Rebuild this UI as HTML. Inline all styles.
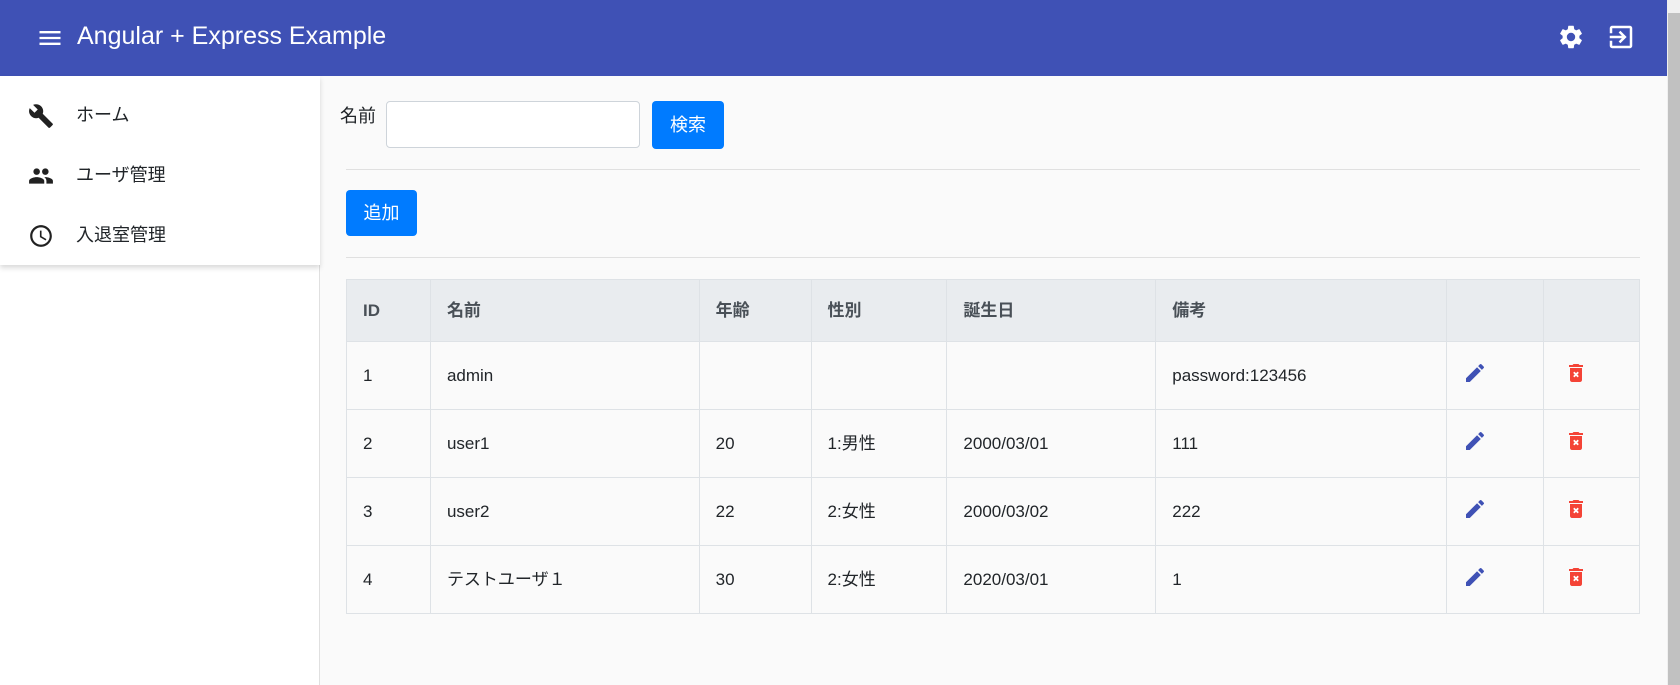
<!DOCTYPE html>
<html><head><meta charset="utf-8"><style>
*{box-sizing:border-box;margin:0;padding:0}
body{width:1680px;height:685px;overflow:hidden;background:#fafafa;font-family:"Liberation Sans","Noto Sans CJK JP",sans-serif;color:#212529;position:relative;line-height:1.2}
.tb{position:absolute;left:0;top:0;width:1667px;height:76px;background:#3f51b5;color:#fff}
.tb .t{position:absolute;left:77px;top:21px;font-size:25px;line-height:30px}
.sb{position:absolute;left:0;top:76px;width:320px;height:609px;background:#fff;border-right:1px solid #e0e0e0}
.menu{position:absolute;left:0;top:76px;width:320px;height:189px;background:#fff;box-shadow:0 3px 5px rgba(0,0,0,.15)}
.mi{position:absolute;left:0;height:60px;width:320px;font-size:18px}
.mi svg{position:absolute;left:28px;top:18px}
.mi span{position:absolute;left:76px;top:18px;line-height:24px}
.scroll{position:absolute;left:1667px;top:0;width:13px;height:685px;background:#f0f0f0}
.scroll div{position:absolute;left:1px;top:13px;width:12px;height:672px;background:#c1c1c1}
.lbl{position:absolute;left:340px;top:104px;font-size:18px;line-height:24px}
.inp{position:absolute;left:386px;top:101px;width:254px;height:47px;border:1px solid #ced4da;border-radius:4px;background:#fff}
.btn{position:absolute;background:#007bff;color:#fff;border-radius:4px;font-size:18px;text-align:center}
.hr{position:absolute;left:346px;width:1294px;height:1px;background:#e0e0e0}
table{position:absolute;left:346px;top:279px;width:1294px;border-collapse:collapse;font-size:17px}
td,th{border:1px solid #dee2e6;padding:0 16px;text-align:left;vertical-align:middle;line-height:22px}
th{background:#e9ecef;color:#495057;height:62px;font-weight:bold}
td{height:68px}
</style></head><body>
<div class="tb">
<svg style="position:absolute;left:36px;top:24px" width="28" height="28" viewBox="0 0 24 24"><path fill="#fff" d="M3 18h18v-2H3v2zm0-5h18v-2H3v2zm0-7v2h18V6H3z"/></svg>
<div class="t">Angular + Express Example</div>
<svg style="position:absolute;left:1557px;top:23px" width="28" height="28" viewBox="0 0 24 24"><path fill="#fff" d="M19.14 12.94c.04-.3.06-.61.06-.94 0-.32-.02-.64-.07-.94l2.030-1.58a.49.49 0 0 0 .12-.61l-1.92-3.32a.49.49 0 0 0-.59-.22l-2.39.96c-.5-.38-1.03-.7-1.62-.94l-.36-2.54a.48.48 0 0 0-.48-.41h-3.84c-.24 0-.43.17-.47.41l-.36 2.54c-.59.24-1.13.57-1.62.94l-2.39-.96a.48.48 0 0 0-.59.22L2.74 8.87c-.12.21-.08.47.12.61l2.03 1.58c-.05.3-.09.63-.09.94s.02.64.07.94l-2.03 1.58a.49.49 0 0 0-.12.61l1.92 3.32c.12.22.37.29.59.22l2.39-.96c.5.38 1.03.7 1.62.94l.36 2.54c.05.24.24.41.48.41h3.84c.24 0 .44-.17.47-.41l.36-2.54c.59-.24 1.130-.56 1.62-.94l2.39.96c.22.08.47 0 .59-.22l1.92-3.32c.12-.22.07-.47-.12-.61l-2.01-1.58zM12 15.6A3.6 3.6 0 1 1 12 8.4a3.6 3.6 0 0 1 0 7.2z"/></svg>
<svg style="position:absolute;left:1606px;top:22px" width="30" height="30" viewBox="0 0 24 24"><path fill="#fff" d="M10.09 15.59 11.5 17l5-5-5-5-1.41 1.41L12.67 11H3v2h9.67l-2.58 2.59zM19 3H5a2 2 0 0 0-2 2v4h2V5h14v14H5v-4H3v4a2 2 0 0 0 2 2h14c1.1 0 2-.9 2-2V5c0-1.1-.9-2-2-2z"/></svg>
</div>
<div class="sb"></div>
<div class="menu">
<div class="mi" style="top:9px"><svg width="26" height="26" viewBox="0 0 24 24"><path fill="#212121" d="M22.7 19l-9.1-9.1c.9-2.3.4-5-1.5-6.9-2-2-5-2.4-7.4-1.3L9 6 6 9 1.6 4.7C.4 7.1.9 10.1 2.9 12.1c1.9 1.9 4.6 2.4 6.9 1.5l9.1 9.1c.4.4 1 .4 1.4 0l2.3-2.3c.5-.4.5-1.1.1-1.4z"/></svg><span>ホーム</span></div>
<div class="mi" style="top:69px"><svg width="26" height="26" viewBox="0 0 24 24"><path fill="#212121" d="M16 11c1.66 0 2.99-1.34 2.99-3S17.66 5 16 5c-1.66 0-3 1.34-3 3s1.34 3 3 3zm-8 0c1.66 0 2.990-1.34 2.99-3S9.66 5 8 5C6.34 5 5 6.34 5 8s1.34 3 3 3zm0 2c-2.33 0-7 1.17-7 3.5V19h14v-2.5c0-2.33-4.67-3.5-7-3.5zm8 0c-.29 0-.62.02-.97.05 1.16.84 1.97 1.97 1.97 3.45V19h6v-2.5c0-2.33-4.67-3.5-7-3.5z"/></svg><span>ユーザ管理</span></div>
<div class="mi" style="top:129px"><svg width="26" height="26" viewBox="0 0 24 24"><path fill="#212121" d="M11.99 2C6.47 2 2 6.48 2 12s4.47 10 9.99 10C17.52 22 22 17.52 22 12S17.52 2 11.99 2zM12 20c-4.42 0-8-3.58-8-8s3.58-8 8-8 8 3.58 8 8-3.58 8-8 8zm.5-13H11v6l5.25 3.15.75-1.23-4.5-2.67z"/></svg><span>入退室管理</span></div>
</div>
<div class="lbl">名前</div>
<div class="inp"></div>
<div class="btn" style="left:652px;top:101px;width:72px;height:48px;line-height:48px">検索</div>
<div class="hr" style="top:169px"></div>
<div class="btn" style="left:346px;top:190px;width:71px;height:46px;line-height:46px">追加</div>
<div class="hr" style="top:257px"></div>
<table>
<colgroup><col style="width:84px"><col style="width:269px"><col style="width:112px"><col style="width:136px"><col style="width:209px"><col style="width:291px"><col style="width:97px"><col style="width:96px"></colgroup>
<tr><th>ID</th><th>名前</th><th>年齢</th><th>性別</th><th>誕生日</th><th>備考</th><th></th><th></th></tr>
<tr><td>1</td><td>admin</td><td></td><td></td><td></td><td>password:123456</td><td class="e"></td><td class="d"></td></tr>
<tr><td>2</td><td>user1</td><td>20</td><td>1:男性</td><td>2000/03/01</td><td>111</td><td class="e"></td><td class="d"></td></tr>
<tr><td>3</td><td>user2</td><td>22</td><td>2:女性</td><td>2000/03/02</td><td>222</td><td class="e"></td><td class="d"></td></tr>
<tr><td>4</td><td>テストユーザ１</td><td>30</td><td>2:女性</td><td>2020/03/01</td><td>1</td><td class="e"></td><td class="d"></td></tr>
</table>
<script>
document.querySelectorAll('td.e').forEach(function(t){t.innerHTML='<svg width="24" height="24" viewBox="0 0 24 24" style="display:block;margin-left:0;margin-top:-6px"><path fill="#3f51b5" d="M3 17.25V21h3.75L17.81 9.94l-3.75-3.75L3 17.25zM20.71 7.04a1 1 0 0 0 0-1.41l-2.34-2.34a1 1 0 0 0-1.41 0l-1.83 1.83 3.75 3.75 1.83-1.83z"/></svg>';});
document.querySelectorAll('td.d').forEach(function(t){t.innerHTML='<svg width="24" height="24" viewBox="0 0 24 24" style="display:block;margin-left:4px;margin-top:-6px"><path fill="#f44336" d="M15.5 4l-1-1h-5l-1 1H5v2h14V4h-3.5zM6 19c0 1.1.9 2 2 2h8c1.1 0 2-.9 2-2V7H6v12z"/><path stroke="#fff" stroke-width="1.8" d="M9.8 11.3l4.4 4.4M14.2 11.3l-4.4 4.4"/></svg>';});
</script>
<div class="scroll"><div></div></div>
</body></html>
